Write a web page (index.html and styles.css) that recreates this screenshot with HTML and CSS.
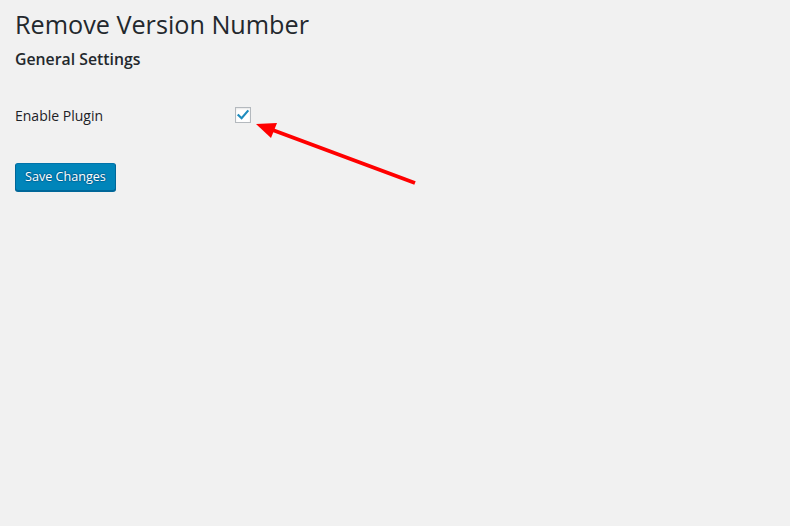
FILE: index.html
```html
<!DOCTYPE html>
<html>
<head>
<meta charset="utf-8">
<link rel="stylesheet" href="styles.css">
</head>
<body>
<div class="wrap">
  <h1 class="title">Remove Version Number</h1>
  <h2 class="subtitle">General Settings</h2>
  <div class="form-row">
    <div class="label">Enable Plugin</div>
    <div class="field">
      <span class="checkbox">
        <svg width="14" height="14" viewBox="0 0 14 14"><path d="M2.5 7.2 L5.6 10.2 L11.6 3.2" fill="none" stroke="#1e8cbe" stroke-width="2.2" stroke-linecap="square"/></svg>
      </span>
    </div>
  </div>
  <div class="submit">
    <button class="button-primary">Save Changes</button>
  </div>
</div>
<svg class="arrow" width="790" height="526" viewBox="0 0 790 526">
  <line x1="415" y1="183" x2="270" y2="129" stroke="#ff0000" stroke-width="4"/>
  <polygon points="256,124 277,123 271,138" fill="#ff0000"/>
</svg>
</body>
</html>
```
FILE: styles.css
```css
html, body {
  margin: 0;
  padding: 0;
  background: #f1f1f1;
  width: 790px;
  height: 526px;
  overflow: hidden;
}
body {
  font-family: "Open Sans", "Noto Sans", sans-serif;
  color: #23282d;
  position: relative;
}
.wrap {
  padding: 6px 0 0 15px;
}
.title {
  font-size: 25.2px;
  font-weight: 400;
  margin: 0;
  line-height: 36px;
}
.subtitle {
  font-size: 15.8px;
  font-weight: 600;
  margin: 5px 0 0 0;
  line-height: 24px;
}
.form-row {
  display: flex;
  align-items: center;
  margin-top: 30px;
  height: 28px;
}
.label {
  width: 220px;
  font-size: 14px;
  font-weight: 400;
  color: #1d2227;
}
.checkbox {
  display: flex;
  align-items: center;
  justify-content: center;
  width: 14px;
  height: 14px;
  border: 1px solid #b4b9be;
  background: #fff;
  box-shadow: inset 0 1px 2px rgba(0,0,0,0.1);
}
.submit {
  margin-top: 34px;
}
.button-primary {
  font-family: inherit;
  font-size: 12.6px;
  height: 28px;
  padding: 0 9px 1px;
  background: #0085ba;
  border: 1px solid #0073aa;
  border-color: #0073aa #006799 #006799;
  border-radius: 3px;
  box-shadow: 0 1px 0 #006799;
  color: #fff;
  text-shadow: 0 -1px 1px #006799, 1px 0 1px #006799, 0 1px 1px #006799, -1px 0 1px #006799;
  cursor: pointer;
}
.arrow {
  position: absolute;
  left: 0;
  top: 0;
  pointer-events: none;
}
```
